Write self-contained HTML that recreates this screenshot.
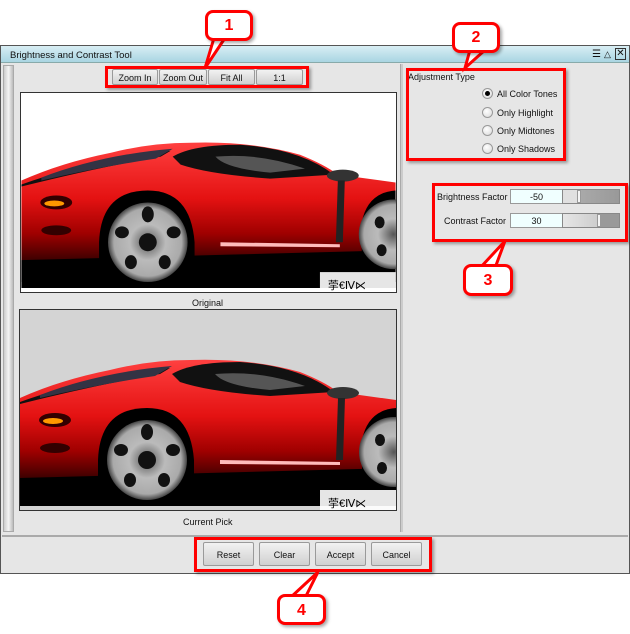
<!DOCTYPE html>
<html><head><meta charset="utf-8"><style>
*{margin:0;padding:0;box-sizing:border-box}
body{width:630px;height:634px;background:#fff;position:relative;overflow:hidden;font-family:"Liberation Sans",sans-serif;font-size:9px;color:#111}
.a{position:absolute}
.win{left:0;top:45px;width:630px;height:529px;border:1px solid #555;background:#e6e6e6}
.title{left:1px;top:46px;width:628px;height:17px;background:linear-gradient(#d8eef4,#a9d5e2);border-bottom:1px solid #8aa;font-size:9.5px;padding:4px 0 0 9px}
.btn{position:absolute;background:linear-gradient(#f2f2f2,#d0d0d0);border:1px solid #9a9a9a;border-radius:2px;text-align:center;font-size:9px}
.red{position:absolute;border:3px solid #f00;box-shadow:2px 2px 3px rgba(0,0,0,.35)}
.call{position:absolute;background:#fff;border:3px solid #f00;border-radius:8px;color:#f00;font-weight:bold;font-size:16px;text-align:center;box-shadow:2px 2px 3px rgba(0,0,0,.35)}
.rad{position:absolute;width:11px;height:11px;border-radius:50%;border:1px solid #999;background:radial-gradient(circle at 40% 35%,#fff,#d8d8d8)}
.lbl{position:absolute;font-size:9px}
.fld{position:absolute;height:15px;width:53px;background:#f0ffff;border:1px solid #999;text-align:center;padding-top:2px}
.sl{position:absolute;height:15px;width:58px;background:linear-gradient(#eee,#bbb);border:1px solid #888}
</style></head><body>
<svg width="0" height="0" style="position:absolute">
<defs>
<linearGradient id="rg" x1="0" y1="0" x2="0" y2="1"><stop offset="0" stop-color="#ff4040"/><stop offset=".4" stop-color="#e41212"/><stop offset=".65" stop-color="#a00000"/><stop offset=".85" stop-color="#3a0000"/><stop offset="1" stop-color="#000"/></linearGradient>
<radialGradient id="wg"><stop offset="0" stop-color="#555"/><stop offset=".45" stop-color="#bbb"/><stop offset=".85" stop-color="#aaa"/><stop offset="1" stop-color="#444"/></radialGradient>
<g id="car">
<path d="M0,88 Q40,70 90,60 Q130,50 170,50 Q230,48 280,62 Q305,72 318,82 L376,90 L376,190 L0,190Z" fill="url(#rg)"/>
<path d="M0,168 L376,158 L376,196 L0,196Z" fill="#000"/>
<path d="M0,92 Q60,70 150,58 L140,64 Q80,74 0,94Z" fill="#111"/>
<path d="M20,85 Q80,62 152,56 L135,66 Q80,74 20,88Z" fill="#334"/>
<path d="M152,64 Q172,52 220,52 Q280,56 314,82 L250,86 Q190,82 160,72Z" fill="#111"/>
<path d="M195,64 Q240,60 285,76 L250,80 Q205,76 195,64Z" fill="#555"/>
<ellipse cx="323" cy="83" rx="16" ry="6" fill="#333"/>
<path d="M318,88 L325,88 L323,150 L316,150Z" fill="#222"/>
<path d="M200,150 L320,152 L320,155 L200,154Z" fill="#fbb"/>
<ellipse cx="35" cy="110" rx="16" ry="7" fill="#300"/>
<ellipse cx="33" cy="111" rx="10" ry="3" fill="#f90"/>
<ellipse cx="35" cy="138" rx="15" ry="5" fill="#300"/>
<path d="M78,150 Q80,98 127,98 Q170,98 174,150 L174,190 L78,190Z" fill="#000"/>
<circle cx="127" cy="150" r="40" fill="url(#wg)"/>
<g fill="#111"><ellipse cx="127" cy="122" rx="6" ry="8"/><ellipse cx="101" cy="140" rx="7" ry="6"/><ellipse cx="153" cy="140" rx="7" ry="6"/><ellipse cx="110" cy="170" rx="6" ry="7"/><ellipse cx="144" cy="170" rx="6" ry="7"/><circle cx="127" cy="150" r="9"/></g>
<path d="M342,130 Q348,100 376,98 L376,190 L342,190Z" fill="#000"/>
<circle cx="374" cy="142" r="35" fill="url(#wg)"/>
<g fill="#111"><ellipse cx="360" cy="130" rx="5" ry="6"/><ellipse cx="362" cy="158" rx="5" ry="6"/></g>
<rect x="300" y="180" width="76" height="20" fill="#fff" opacity=".9"/>
<text x="308" y="197" font-size="11" font-family="Liberation Sans" fill="#000">荢€Ⅳ⋉</text>
</g>
</defs></svg>

<div class="a win"></div>
<div class="a title">Brightness and Contrast Tool</div>
<div class="a" style="left:592px;top:49px;font-size:10px">☰</div>
<div class="a" style="left:604px;top:49px;font-size:9px">△</div>
<div class="a" style="left:615px;top:48px;width:11px;height:12px;border:1px solid #333;font-size:10px;line-height:10px;text-align:center">✕</div>
<div class="a" style="left:3px;top:65px;width:11px;height:467px;background:linear-gradient(90deg,#ccc,#f4f4f4,#bbb);border:1px solid #aaa"></div>
<div class="a" style="left:400px;top:64px;width:3px;height:468px;background:#ccc;border-left:1px solid #aaa"></div>
<div class="a" style="left:2px;top:535px;width:626px;height:2px;background:#aaa"></div>

<div class="btn" style="left:112px;top:69px;width:46px;height:16px;padding-top:3px">Zoom In</div>
<div class="btn" style="left:159px;top:69px;width:48px;height:16px;padding-top:3px">Zoom Out</div>
<div class="btn" style="left:208px;top:69px;width:47px;height:16px;padding-top:3px">Fit All</div>
<div class="btn" style="left:256px;top:69px;width:47px;height:16px;padding-top:3px">1:1</div>

<svg class="a" style="left:20px;top:92px;border:1px solid #333;background:#fff" width="377" height="201" viewBox="0 0 376 200"><use href="#car"/></svg>
<div class="lbl" style="left:192px;top:298px">Original</div>
<svg class="a" style="left:19px;top:309px;border:1px solid #333;background:#d4d4d4" width="378" height="202" viewBox="0 0 376 200"><use href="#car"/></svg>
<div class="lbl" style="left:183px;top:517px">Current Pick</div>

<div class="lbl" style="left:408px;top:72px">Adjustment Type</div>
<div class="rad" style="left:482px;top:88px"><div style="width:5px;height:5px;background:#000;border-radius:50%;margin:2px"></div></div>
<div class="lbl" style="left:497px;top:89px">All Color Tones</div>
<div class="rad" style="left:482px;top:107px"></div><div class="lbl" style="left:497px;top:108px">Only Highlight</div>
<div class="rad" style="left:482px;top:125px"></div><div class="lbl" style="left:497px;top:126px">Only Midtones</div>
<div class="rad" style="left:482px;top:143px"></div><div class="lbl" style="left:497px;top:144px">Only Shadows</div>

<div class="lbl" style="left:437px;top:192px">Brightness Factor</div>
<div class="fld" style="left:510px;top:189px">-50</div>
<div class="sl" style="left:562px;top:189px;background:linear-gradient(90deg,#e0e0e0 0,#e0e0e0 28%,#aaa 28%,#999)"><div style="position:absolute;left:14px;top:0;width:4px;height:13px;background:#f4f4f4;border:1px solid #999"></div></div>
<div class="lbl" style="left:444px;top:216px">Contrast Factor</div>
<div class="fld" style="left:510px;top:213px">30</div>
<div class="sl" style="left:562px;top:213px;background:linear-gradient(90deg,#e6e6e6 0,#ccc 65%,#999 65%,#999)"><div style="position:absolute;left:34px;top:0;width:4px;height:13px;background:#f4f4f4;border:1px solid #999"></div></div>

<div class="btn" style="left:203px;top:542px;width:51px;height:24px;padding-top:7px">Reset</div>
<div class="btn" style="left:259px;top:542px;width:51px;height:24px;padding-top:7px">Clear</div>
<div class="btn" style="left:315px;top:542px;width:51px;height:24px;padding-top:7px">Accept</div>
<div class="btn" style="left:371px;top:542px;width:51px;height:24px;padding-top:7px">Cancel</div>

<div class="red" style="left:105px;top:66px;width:204px;height:22px"></div>
<div class="red" style="left:406px;top:68px;width:160px;height:93px"></div>
<div class="red" style="left:432px;top:183px;width:196px;height:59px"></div>
<div class="red" style="left:194px;top:537px;width:238px;height:35px"></div>

<svg class="a" style="left:0;top:0" width="630" height="634">
<g stroke="#f00" stroke-width="3" fill="#fff">
<path d="M214,38 L205,68 L225,38"/><path d="M470,50 L465,68 L485,50"/><path d="M495,268 L505,241 L480,268"/><path d="M305,598 L318,572 L290,598"/>
</g></svg>
<div class="call" style="left:205px;top:10px;width:48px;height:31px;padding-top:4px">1</div>
<div class="call" style="left:452px;top:22px;width:48px;height:31px;padding-top:4px">2</div>
<div class="call" style="left:463px;top:264px;width:50px;height:32px;padding-top:5px">3</div>
<div class="call" style="left:277px;top:594px;width:49px;height:31px;padding-top:5px">4</div>
</body></html>
